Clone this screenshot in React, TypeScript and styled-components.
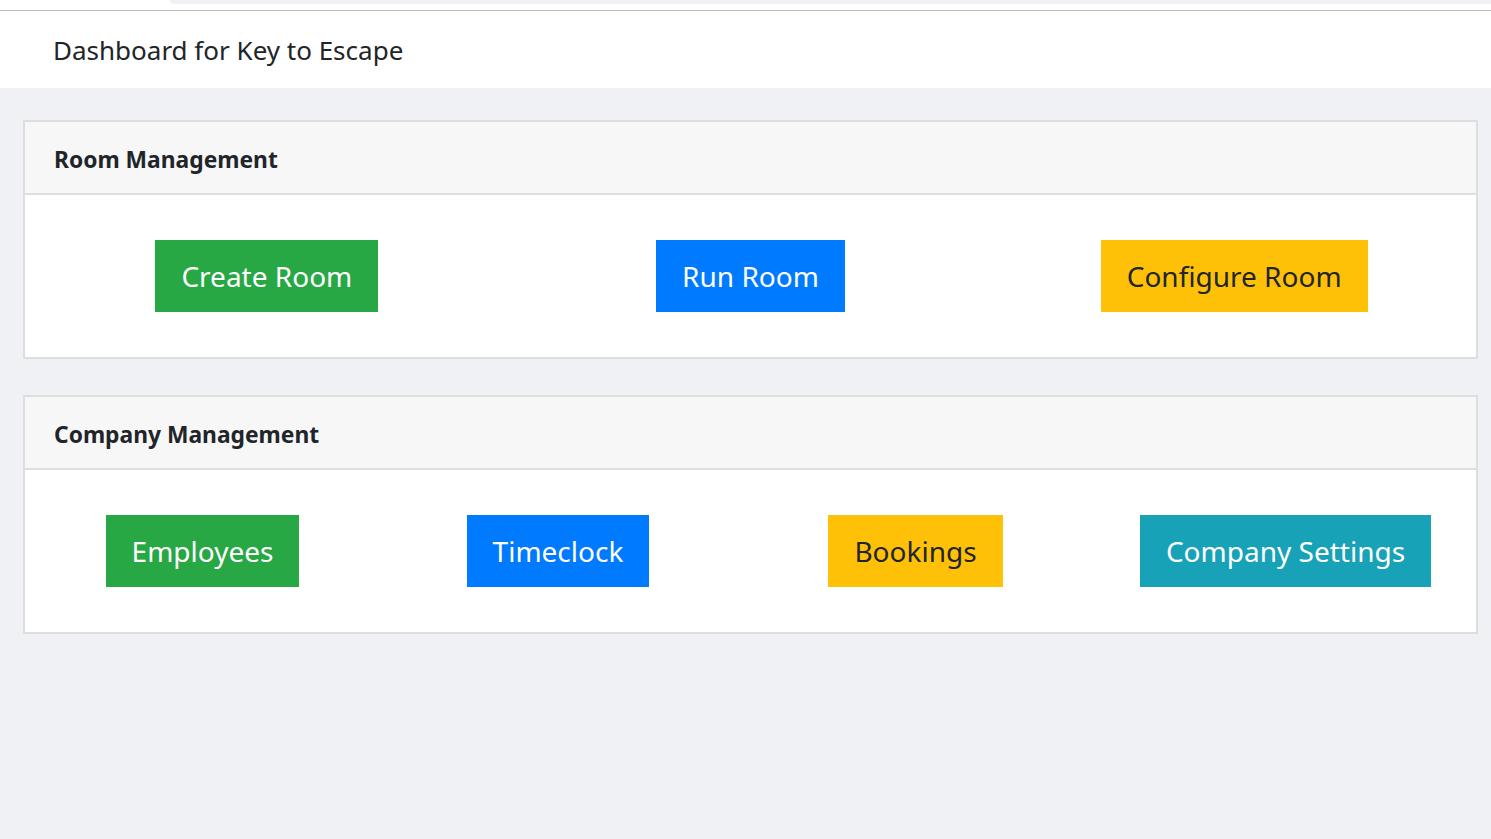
import React from "react";
import styled, { createGlobalStyle } from "styled-components";

const GlobalStyle = createGlobalStyle`
  html, body {
    margin: 0;
    padding: 0;
    background: #f0f1f5;
    font-family: "Noto Sans", "Open Sans", sans-serif;
    color: #212529;
  }
  * { box-sizing: border-box; }
`;

const Page = styled.div`
  min-height: 839px;
  background: #f0f1f5;
`;

const Chrome = styled.div`
  height: 10px;
  background: #ffffff;
  display: flex;
`;

const ChromeTab = styled.div`
  margin-left: 170px;
  flex: 1;
  height: 4px;
  background: #f0f1f5;
  border-bottom-left-radius: 10px;
`;

const Divider = styled.div`
  height: 1px;
  background: #b8b8b8;
`;

const TopBar = styled.header`
  height: 77px;
  background: #ffffff;
  display: flex;
  align-items: center;
  padding-left: 53px;
`;

const Brand = styled.h1`
  margin: 0;
  font-size: 26px;
  font-weight: 400;
  color: #212529;
`;

const Main = styled.main`
  padding: 32px 13px 0 23px;
  display: flex;
  flex-direction: column;
  gap: 36px;
`;

const Card = styled.section`
  background: #ffffff;
  border: 2px solid #dedee1;
`;

const CardHeader = styled.div`
  height: 73px;
  background: #f7f7f7;
  border-bottom: 2px solid #dedee1;
  display: flex;
  align-items: center;
  padding: 3px 0 0 29px;
`;

const CardTitle = styled.h2`
  margin: 0;
  font-size: 22.8px;
  font-weight: 700;
  color: #212529;
`;

const CardBody = styled.div<{ $columns: string }>`
  padding: 45px 0;
  display: grid;
  grid-template-columns: ${(p) => p.$columns};
  justify-items: center;
`;

const variants: Record<string, { bg: string; fg: string }> = {
  success: { bg: "#28a745", fg: "#ffffff" },
  primary: { bg: "#007bff", fg: "#ffffff" },
  warning: { bg: "#ffc107", fg: "#212529" },
  info: { bg: "#17a2b8", fg: "#ffffff" },
};

const Button = styled.button<{ $variant: string }>`
  height: 72px;
  padding: 0 26px;
  border: none;
  border-radius: 0;
  background: ${(p) => variants[p.$variant].bg};
  color: ${(p) => variants[p.$variant].fg};
  font-family: "Noto Sans", "Open Sans", sans-serif;
  font-size: 28px;
  font-weight: 400;
  cursor: pointer;
  white-space: nowrap;
`;

export default function App() {
  return (
    <Page>
      <GlobalStyle />
      <Chrome>
        <ChromeTab />
      </Chrome>
      <Divider />
      <TopBar>
        <Brand>Dashboard for Key to Escape</Brand>
      </TopBar>
      <Main>
        <Card>
          <CardHeader>
            <CardTitle>Room Management</CardTitle>
          </CardHeader>
          <CardBody $columns="repeat(3, 1fr)">
            <Button $variant="success">Create Room</Button>
            <Button $variant="primary">Run Room</Button>
            <Button $variant="warning">Configure Room</Button>
          </CardBody>
        </Card>
        <Card>
          <CardHeader>
            <CardTitle>Company Management</CardTitle>
          </CardHeader>
          <CardBody $columns="355px 356px 359px 1fr">
            <Button $variant="success">Employees</Button>
            <Button $variant="primary">Timeclock</Button>
            <Button $variant="warning">Bookings</Button>
            <Button $variant="info">Company Settings</Button>
          </CardBody>
        </Card>
      </Main>
    </Page>
  );
}
